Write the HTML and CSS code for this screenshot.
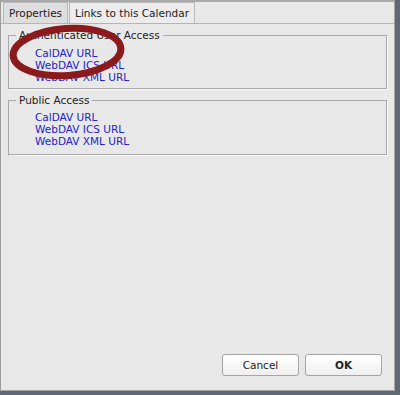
FILE: index.html
```html
<!DOCTYPE html>
<html lang="en">
<head>
    <meta charset="UTF-8">
    <title>Calendar Properties</title>
    <link rel="stylesheet" href="styles.css">
</head>
<body>
    <div class="dialog">
        <div class="tabs">
            <div class="tab">Properties</div>
            <div class="tab active">Links to this Calendar</div>
        </div>
        <div class="panel">
            <fieldset class="group">
                <legend>Authenticated User Access</legend>
                <a href="#" class="link">CalDAV URL</a>
                <a href="#" class="link">WebDAV ICS URL</a>
                <a href="#" class="link">WebDAV XML URL</a>
            </fieldset>
            <fieldset class="group public">
                <legend>Public Access</legend>
                <a href="#" class="link">CalDAV URL</a>
                <a href="#" class="link">WebDAV ICS URL</a>
                <a href="#" class="link">WebDAV XML URL</a>
            </fieldset>
        </div>
        <div class="buttons">
            <button class="btn">Cancel</button>
            <button class="btn default">OK</button>
        </div>
    </div>
    <svg class="mark" width="400" height="395" viewBox="0 0 400 395">
        <ellipse cx="67" cy="52" rx="54" ry="23.5" transform="rotate(-4 67 52)" fill="none" stroke="#8b1a1d" stroke-width="7"/>
    </svg>
</body>
</html>
```

FILE: styles.css
```css
body {
    margin: 0;
    width: 400px;
    height: 395px;
    background-color: #5f6873;
    font-family: "DejaVu Sans", Verdana, sans-serif;
    font-size: 10.5px;
    color: #222;
    position: relative;
    overflow: hidden;
}
.dialog {
    width: 393px;
    height: 388px;
    background-color: #e8e8e8;
    border-top: 2px solid #a9a9a9;
    border-left: 1px solid #9c9c9c;
    border-right: 1px solid #a4a4a4;
    border-bottom: 1px solid #a4a4a4;
    display: flex;
    flex-direction: column;
}
.tabs {
    display: flex;
    padding-left: 2px;
    height: 21px;
    border-bottom: 1px solid #b4b4b4;
}
.tab {
    padding: 0 5px;
    line-height: 20px;
    background-color: #dedede;
    border: 1px solid #b8b8b8;
    border-bottom: none;
    margin-right: 1px;
}
.tab.active {
    background-color: #ececec;
}
.panel {
    flex: 1;
    padding: 5px 6px 0 7px;
    display: flex;
    flex-direction: column;
    gap: 4px;
}
.group {
    margin: 0;
    padding: 6px 0 6px 7px;
    border: 1px solid #a8a8a8;
    border-right-color: #fafafa;
    border-bottom-color: #fafafa;
    box-shadow: inset -1px -1px 0 #a8a8a8;
    display: flex;
    flex-direction: column;
}
.group.public {
    padding-top: 5px;
    padding-bottom: 8px;
}
.group legend {
    padding: 0 3px;
    line-height: 12px;
    color: #222;
}
.link {
    margin-left: 19px;
    color: #2323c8;
    text-decoration: none;
    line-height: 12px;
}
.buttons {
    display: flex;
    justify-content: flex-end;
    gap: 6px;
    padding: 0 12px 14px 0;
}
.btn {
    width: 77px;
    height: 22px;
    font-family: "DejaVu Sans", Verdana, sans-serif;
    font-size: 10.5px;
    color: #222;
    background: linear-gradient(#ffffff, #efefef);
    border: 1px solid #a5a5a5;
    border-radius: 3px;
}
.btn.default {
    font-weight: bold;
}
.mark {
    position: absolute;
    top: 0;
    left: 0;
    pointer-events: none;
}
```
